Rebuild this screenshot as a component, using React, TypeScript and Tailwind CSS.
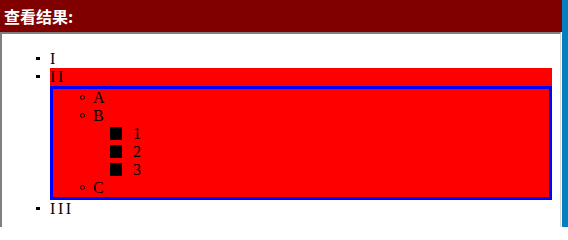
import React from "react";

const serif = { fontFamily: '"Liberation Serif", "Noto Sans CJK SC", serif' };

type Kind = "disc" | "circle" | "square";

function Marker({ kind }: { kind: Kind }) {
  if (kind === "disc")
    return (
      <span className="flex w-[40px] shrink-0 justify-end pr-[10px] pt-[7px]">
        <span className="h-[3px] w-[4px] bg-black" />
      </span>
    );
  if (kind === "circle")
    return (
      <span className="flex w-[40px] shrink-0 justify-end pr-[8px] pt-[6px]">
        <span className="h-[5px] w-[5px] rounded-full border border-black" />
      </span>
    );
  return (
    <span className="flex w-[40px] shrink-0 justify-end pr-[11px] pt-[2px]">
      <span className="h-[13px] w-[12px] bg-black" />
    </span>
  );
}

function Item({
  kind,
  children,
  className = "",
}: {
  kind: Kind;
  children: React.ReactNode;
  className?: string;
}) {
  return (
    <li className="flex">
      <Marker kind={kind} />
      <div className={"min-h-[18px] flex-1 " + className}>{children}</div>
    </li>
  );
}

export default function App() {
  return (
    <div className="flex h-[227px] w-[568px] overflow-hidden bg-white">
      <div className="flex w-[562px] flex-col">
        <div className="flex h-[32px] items-center bg-[#800000] pl-[4px]">
          <span
            className="text-[16px] font-bold leading-none text-white"
            style={{ fontFamily: '"Noto Sans CJK SC", sans-serif' }}
          >
            查看结果:
          </span>
        </div>
        <div className="mr-[1px] flex-1 border-l-2 border-t-2 border-r border-l-[#808080] border-t-[#808080] border-r-[#d8d8d8] px-[8px]">
          <ul
            className="mt-[16px] flex flex-col text-[16px] leading-[18px] tracking-[2.6px] text-black"
            style={serif}
          >
            <Item kind="disc">I</Item>
            <Item kind="disc" className="bg-[#ff0000]">
              <div className="h-[18px]">II</div>
              <ul className="flex flex-col border-[3px] border-[#0000ff] bg-[#ff0000] tracking-normal">
                <Item kind="circle">A</Item>
                <Item kind="circle">
                  <div className="h-[18px]">B</div>
                  <ul className="flex flex-col">
                    <Item kind="square">1</Item>
                    <Item kind="square">2</Item>
                    <Item kind="square">3</Item>
                  </ul>
                </Item>
                <Item kind="circle">C</Item>
              </ul>
            </Item>
            <Item kind="disc">III</Item>
          </ul>
        </div>
      </div>
      <div className="w-[6px] bg-[#0080c0]" />
    </div>
  );
}
